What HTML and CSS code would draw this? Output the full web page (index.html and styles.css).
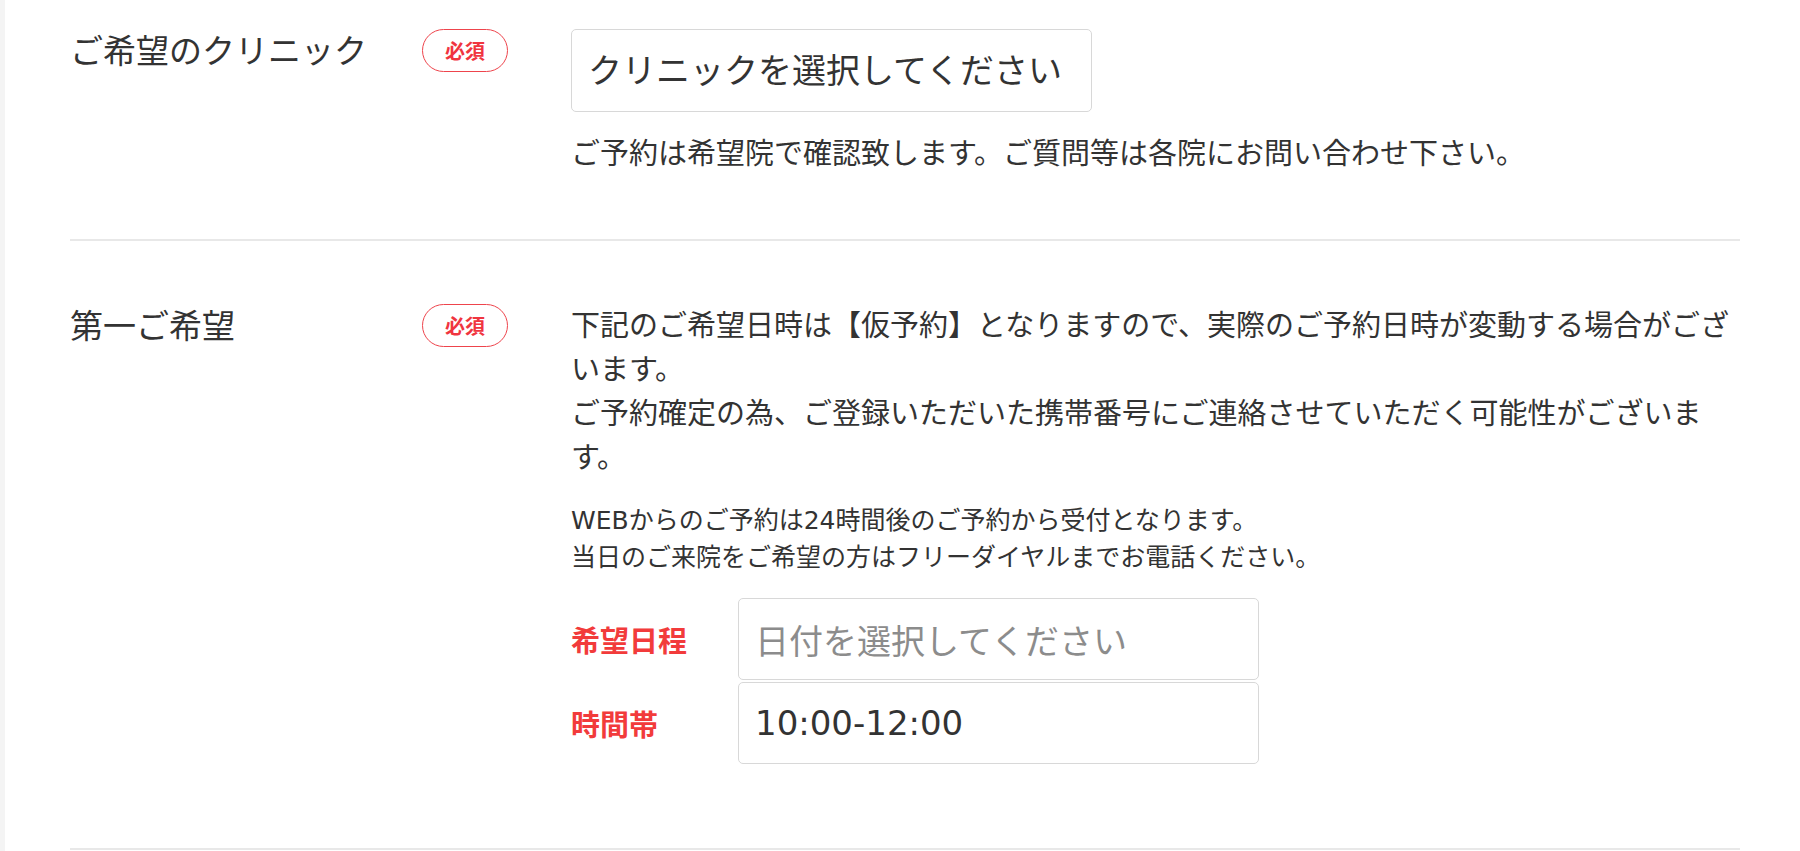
FILE: index.html
```html
<!DOCTYPE html>
<html lang="ja">
<head>
<meta charset="utf-8">
<title>ご予約フォーム</title>
<link rel="stylesheet" href="styles.css">
</head>
<body>
<div class="page">
  <form class="form">
    <div class="row">
      <div class="label">ご希望のクリニック</div>
      <div class="req"><span class="badge">必須</span></div>
      <div class="field">
        <div class="control select">クリニックを選択してください</div>
        <p class="hint">ご予約は希望院で確認致します。ご質問等は各院にお問い合わせ下さい。</p>
      </div>
    </div>
    <div class="row">
      <div class="label">第一ご希望</div>
      <div class="req"><span class="badge">必須</span></div>
      <div class="field">
        <p class="lead">下記のご希望日時は【仮予約】となりますので、実際のご予約日時が変動する場合がございます。<br>ご予約確定の為、ご登録いただいた携帯番号にご連絡させていただく可能性がございます。</p>
        <p class="note">WEBからのご予約は24時間後のご予約から受付となります。<br>当日のご来院をご希望の方はフリーダイヤルまでお電話ください。</p>
        <div class="picks">
          <div class="pick">
            <span class="pick-label">希望日程</span>
            <div class="control placeholder">日付を選択してください</div>
          </div>
          <div class="pick">
            <span class="pick-label">時間帯</span>
            <div class="control time">10:00-12:00</div>
          </div>
        </div>
      </div>
    </div>
  </form>
</div>
</body>
</html>
```

FILE: styles.css
```css
* {
  box-sizing: border-box;
}

html,
body {
  margin: 0;
  background: #ffffff;
}

body {
  font-family: "DejaVu Sans", "Noto Sans CJK JP", sans-serif;
  color: #333333;
}

.page {
  border-left: 5px solid #f4f4f4;
  padding-left: 65px;
  min-height: 851px;
  overflow: hidden;
}

.form {
  width: 1670px;
  margin-top: -34px;
}

.row {
  display: grid;
  grid-template-columns: 352px 149px 1fr;
  padding: 63px 0 63px;
  border-bottom: 2px solid #e8e8e8;
}

.label {
  font-family: "Noto Sans CJK JP", sans-serif;
  font-size: 33px;
  line-height: 40px;
  color: #333333;
}

.req {
  display: flex;
  align-items: flex-start;
}

.badge {
  display: inline-flex;
  align-items: center;
  justify-content: center;
  width: 86px;
  height: 43px;
  border: 1.5px solid #ee444c;
  border-radius: 22px;
  color: #f0353f;
  font-family: "Noto Sans CJK JP", sans-serif;
  font-weight: 700;
  font-size: 20px;
  line-height: 1;
}

.field {
  min-width: 0;
}

.control {
  display: flex;
  align-items: center;
  width: 521px;
  height: 82px;
  padding: 0 16px;
  border: 1px solid #d8d8d8;
  border-radius: 5px;
  background: #ffffff;
  font-family: "Noto Sans CJK JP", sans-serif;
  font-size: 34px;
  color: #333333;
  white-space: nowrap;
}

.select {
  height: 83px;
  padding-bottom: 4px;
}

.placeholder {
  color: #8c8c8c;
}

.time {
  font-family: "DejaVu Sans", "Noto Sans CJK JP", sans-serif;
  font-size: 34px;
}

.hint {
  margin: 20px 0 0;
  font-size: 29px;
  line-height: 44px;
}

.lead {
  margin: 0;
  font-size: 29px;
  line-height: 44px;
}

.note {
  margin: 22px 0 0;
  font-size: 25px;
  line-height: 37px;
}

.picks {
  display: flex;
  flex-direction: column;
  gap: 2px;
  margin: 22px 0 21px;
}

.pick {
  display: grid;
  grid-template-columns: 167px 521px;
  align-items: center;
}

.pick-label {
  font-family: "Noto Sans CJK JP", sans-serif;
  font-weight: 700;
  font-size: 29px;
  color: #f23b3b;
}
```
